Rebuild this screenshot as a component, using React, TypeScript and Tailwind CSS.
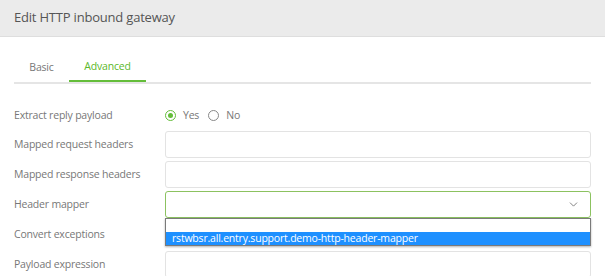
import { ChevronDown } from "lucide-react";

const labelCls = "w-[151px] shrink-0 text-[10.5px] tracking-[-0.2px] text-[#777]";

function Row({ label, children, h = "h-[27px]" }: { label: string; children: React.ReactNode; h?: string }) {
    return (
        <div className={`flex items-center ${h}`}>
            <div className={labelCls}>{label}</div>
            <div className="flex-1 h-full">{children}</div>
        </div>
    );
}

function TextBox() {
    return <div className="h-full border border-[#e3e3e3] rounded-[3px] bg-white" />;
}

export default function App() {
    return (
        <div className="w-[605px] h-[276px] overflow-hidden bg-white" style={{ fontFamily: "'Open Sans', 'Noto Sans', sans-serif" }}>
            <div className="h-[37px] bg-[#ebebeb] border-b border-[#dedede] flex items-center px-[14px]">
                <span className="text-[13px] text-[#555] tracking-[-0.2px]">Edit HTTP inbound gateway</span>
            </div>

            <div className="px-[14px]">
                <div className="mt-[15px] flex border-b-2 border-[#e5e5e5] w-[577px]">
                    <div className="w-[55px] h-[30px] pt-[2px] flex items-center justify-center text-[10.5px] tracking-[-0.2px] text-[#777]">Basic</div>
                    <div className="w-[77px] h-[30px] pt-[2px] flex items-center justify-center text-[10.5px] tracking-[-0.2px] text-[#5cb82b] border-b-2 border-[#64bd3a] -mb-[2px]">
                        Advanced
                    </div>
                </div>

                <div className="mt-[19px] flex flex-col gap-[3px] w-[577px]">
                    <Row label="Extract reply payload" h="h-[25px]">
                        <div className="flex items-center h-full text-[10.5px] tracking-[-0.2px] text-[#777]">
                            <span className="w-[11px] h-[11px] rounded-full border border-[#64bd3a] flex items-center justify-center">
                                <span className="w-[5px] h-[5px] rounded-full bg-[#64bd3a]" />
                            </span>
                            <span className="ml-[7px]">Yes</span>
                            <span className="ml-[9px] w-[11px] h-[11px] rounded-full border border-[#888]" />
                            <span className="ml-[7px]">No</span>
                        </div>
                    </Row>
                    <Row label="Mapped request headers">
                        <TextBox />
                    </Row>
                    <Row label="Mapped response headers">
                        <TextBox />
                    </Row>
                    <Row label="Header mapper">
                        <div className="relative h-full">
                            <div className="h-full border border-[#8cc260] rounded-[3px] bg-white flex items-center justify-end pr-[10px]">
                                <ChevronDown className="w-[13px] h-[13px] text-[#666]" strokeWidth={1.5} />
                            </div>
                            <div className="absolute left-0 right-0 top-[27px] z-10 bg-white border border-[#7a7a7a] shadow-[0_1px_2px_rgba(0,0,0,0.3)]">
                                <div className="h-[13px]" />
                                <div className="h-[13px] bg-[#1e90ff] text-white text-[10.5px] tracking-[-0.2px] leading-[13px] pl-[6px]">
                                    rstwbsr.all.entry.support.demo-http-header-mapper
                                </div>
                            </div>
                        </div>
                    </Row>
                    <Row label="Convert exceptions">
                        <div />
                    </Row>
                    <Row label="Payload expression">
                        <TextBox />
                    </Row>
                </div>
            </div>
        </div>
    );
}
